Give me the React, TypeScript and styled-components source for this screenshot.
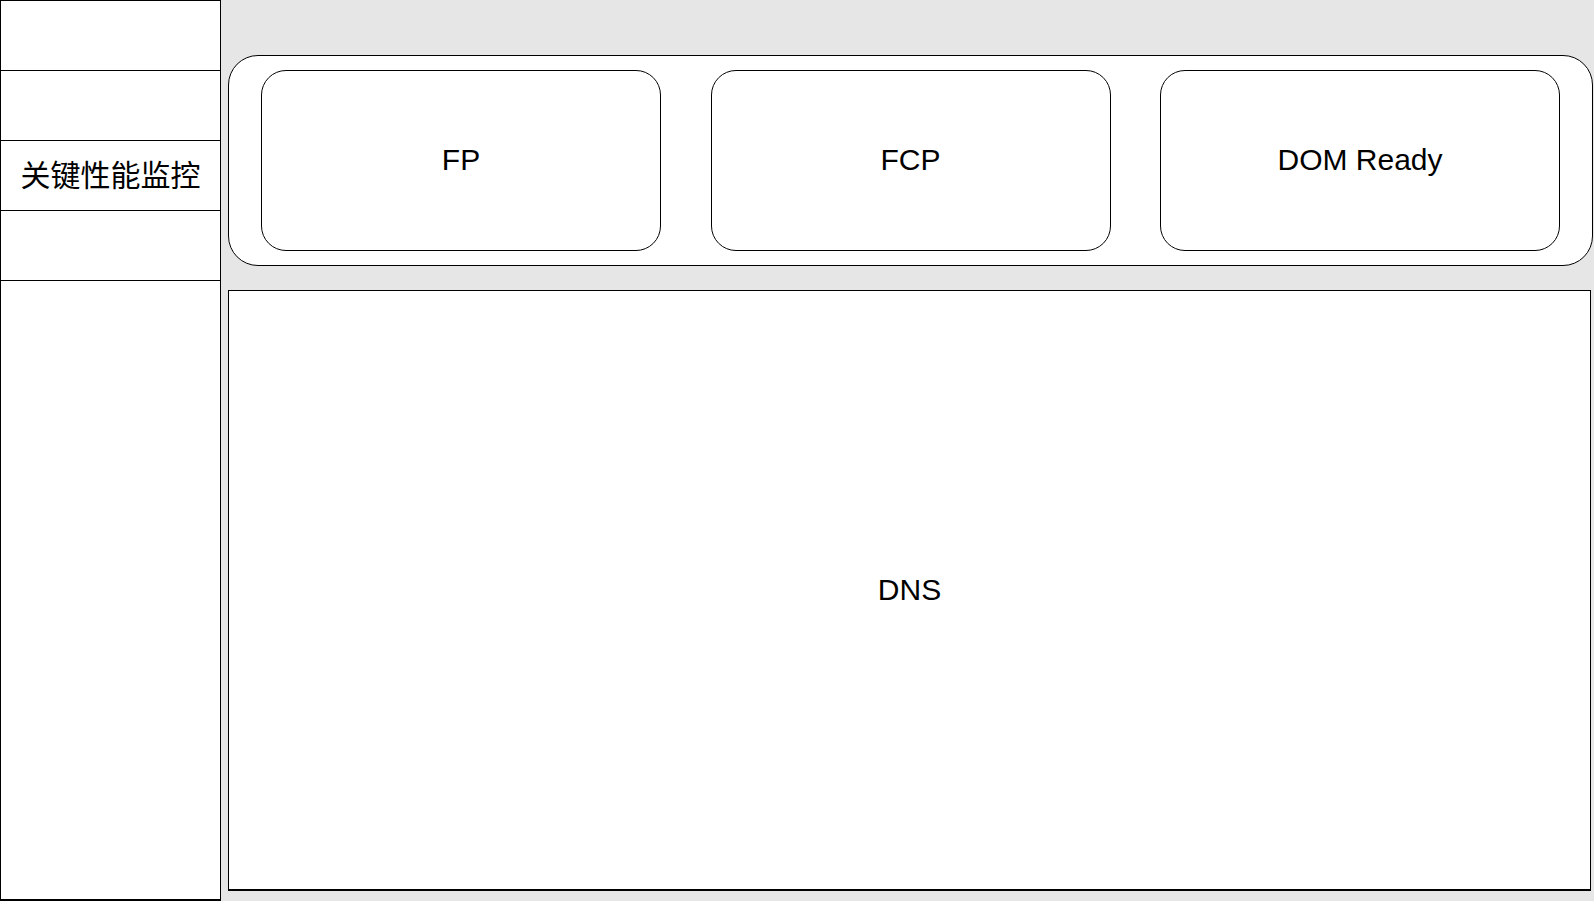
import React from 'react';
import styled, { createGlobalStyle } from 'styled-components';

const GlobalStyle = createGlobalStyle`
  html, body {
    margin: 0;
    padding: 0;
    background: #e6e6e6;
    font-family: "Liberation Sans", Arial, "Noto Sans CJK SC", sans-serif;
    color: #000;
  }
  * { box-sizing: border-box; }
`;

const Page = styled.div`
  display: flex;
  width: 100vw;
  height: 100vh;
  overflow: hidden;
`;

const Sidebar = styled.nav`
  width: 221px;
  flex-shrink: 0;
  height: 100%;
  display: flex;
  flex-direction: column;
  background: #fff;
  border: 1px solid #000;
  border-top: none;
  border-bottom-width: 2px;
`;

const NavItem = styled.div<{ $fill?: boolean }>`
  height: ${p => (p.$fill ? 'auto' : '70px')};
  flex: ${p => (p.$fill ? 1 : 'none')};
  border-top: 1px solid #000;
  display: flex;
  align-items: center;
  justify-content: center;
  font-family: "Noto Sans CJK SC", "Liberation Sans", sans-serif;
  font-size: 30px;
  padding-bottom: 5px;
`;

const Main = styled.main`
  flex: 1;
  display: flex;
  flex-direction: column;
  gap: 24px;
  padding: 55px 1px 10px 7px;
`;

const MetricPanel = styled.section`
  height: 211px;
  display: flex;
  justify-content: space-between;
  padding: 14px 32px;
  background: #fff;
  border: 1px solid #000;
  border-radius: 30px;
`;

const MetricCard = styled.div`
  width: 400px;
  height: 181px;
  display: flex;
  align-items: center;
  justify-content: center;
  border: 1px solid #000;
  border-radius: 25px;
  font-size: 30px;
  padding-bottom: 1px;
`;

const ChartBox = styled.section`
  flex: 1;
  margin-right: 2px;
  display: flex;
  align-items: center;
  justify-content: center;
  background: #fff;
  border: 1px solid #000;
  border-bottom-width: 2px;
  font-size: 30px;
`;

const metrics = ['FP', 'FCP', 'DOM Ready'];

export default function App() {
  return (
    <Page>
      <GlobalStyle />
      <Sidebar>
        <NavItem />
        <NavItem />
        <NavItem>关键性能监控</NavItem>
        <NavItem />
        <NavItem $fill />
      </Sidebar>
      <Main>
        <MetricPanel>
          {metrics.map(m => (
            <MetricCard key={m}>{m}</MetricCard>
          ))}
        </MetricPanel>
        <ChartBox>DNS</ChartBox>
      </Main>
    </Page>
  );
}
